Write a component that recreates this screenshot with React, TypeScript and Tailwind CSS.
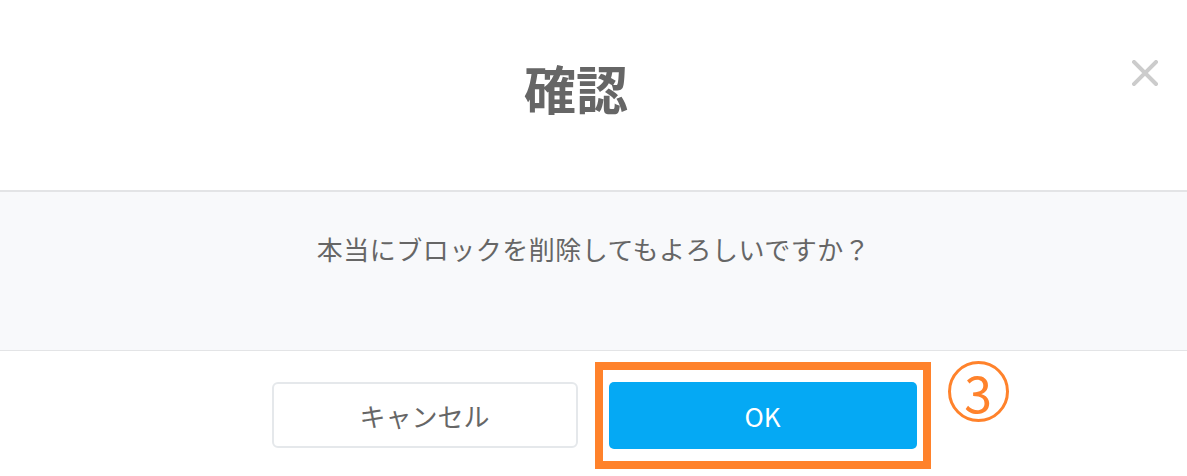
import { useState } from 'react';

const jp = { fontFamily: '"Noto Sans CJK JP", "Noto Sans", sans-serif' };

const CloseIcon = () => (
  <svg width="26" height="26" viewBox="0 0 26 26" fill="none">
    <path d="M2 2 L24 24 M24 2 L2 24" stroke="#cccccc" strokeWidth="4" strokeLinecap="square" />
  </svg>
);

export default function App() {
  const [open, setOpen] = useState(true);

  return (
    <div className="w-[1187px] h-[476px] bg-white text-[#666666] overflow-hidden" style={jp}>
      <div className="h-[192px] flex items-start justify-between border-b-2 border-[#e3e4e6] pl-[26px] pr-[29px] pt-[60px]">
        <div className="flex-1 flex justify-center pt-[2px]">
          <h1 className="text-[52px] font-bold leading-none text-[#666666]">確認</h1>
        </div>
        <button className="p-0 ml-[6px]" onClick={() => setOpen(!open)} aria-label="close">
          <CloseIcon />
        </button>
      </div>

      <div className="h-[159px] bg-[#f8f9fb] border-b border-[#e3e4e6] pt-[37px] text-center">
        <p className="text-[26px] leading-[39px] tracking-[0.5px]">本当にブロックを削除してもよろしいですか？</p>
      </div>

      <div className="flex justify-center items-start gap-[31px] pt-[31px] pl-[1px]">
        <button className="w-[306px] h-[66px] rounded-[6px] border-2 border-[#e5e8eb] bg-white text-[26px] text-[#666666]">
          キャンセル
        </button>
        <div className="relative">
          <div className="absolute left-[-14px] right-[-14px] top-[-20px] bottom-[-20px] border-[8px] border-[#ff822b]" />
          <button className="relative w-[308px] h-[67px] rounded-[5px] bg-[#05a9f4] text-white text-[26px]">
            OK
          </button>
          <div className="absolute left-[339px] top-[-21px] w-[61px] h-[61px] rounded-full border-[3px] border-[#ff822b] flex items-center justify-center text-[#ff822b] text-[50px] leading-none pb-[2px]">
            3
          </div>
        </div>
      </div>
    </div>
  );
}
